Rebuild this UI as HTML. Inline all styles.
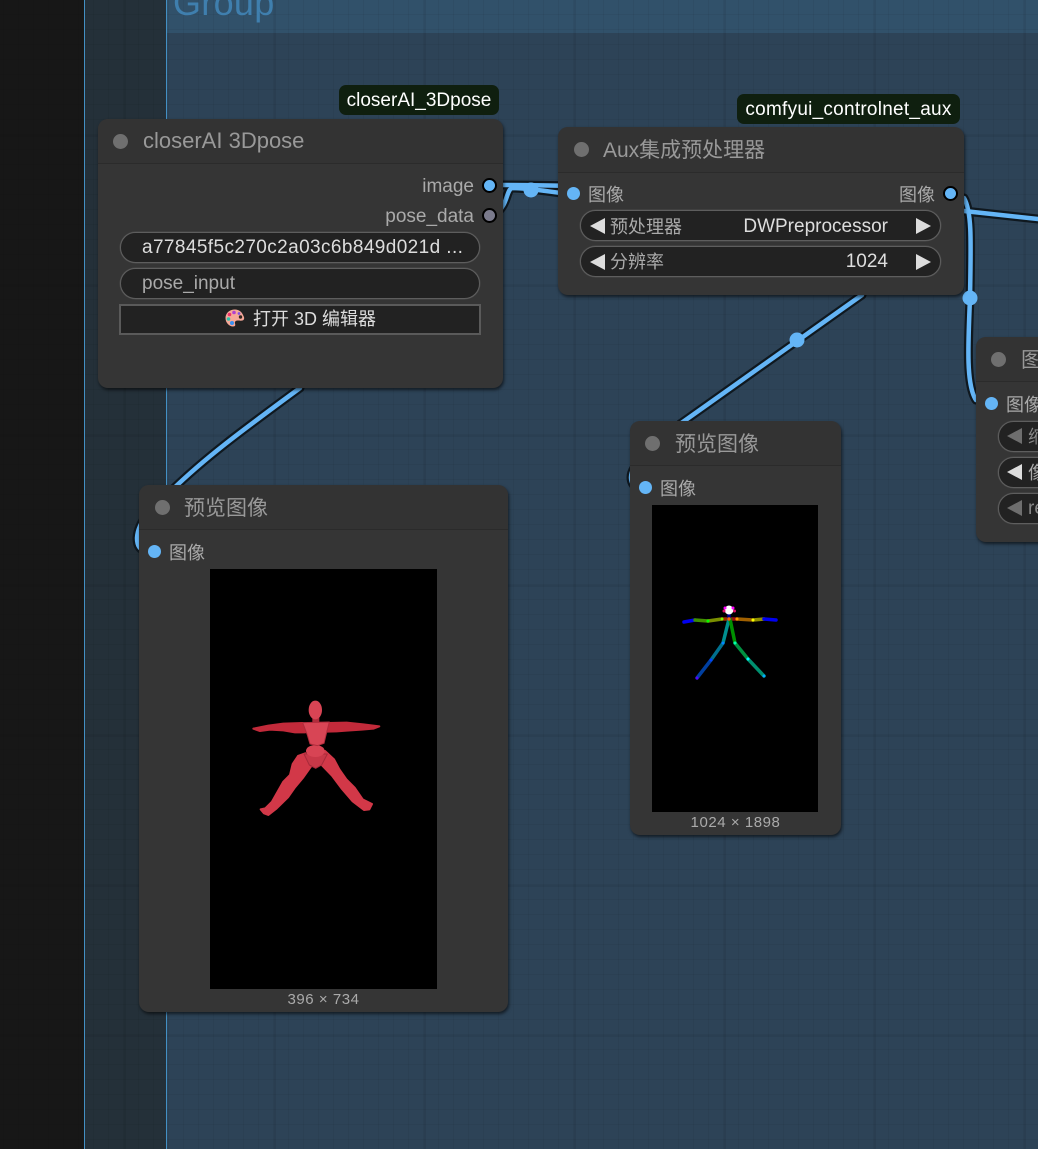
<!DOCTYPE html>
<html><head><meta charset="utf-8">
<style>
html,body{margin:0;padding:0;background:#171717}
#c{position:relative;width:1038px;height:1149px;overflow:hidden;background:#171717;font-family:"Liberation Sans","Noto Sans CJK SC",sans-serif}
.abs{position:absolute}
.grid{position:absolute;left:0;top:0;width:1038px;height:1149px;
background-image:
linear-gradient(to right,rgba(0,0,0,.07) 0,rgba(0,0,0,.07) 2px,transparent 2px),
linear-gradient(to bottom,rgba(0,0,0,.06) 0,rgba(0,0,0,.06) 2px,transparent 2px),
linear-gradient(to right,rgba(0,0,0,.05) 0,rgba(0,0,0,.05) 1px,transparent 1px),
linear-gradient(to bottom,rgba(0,0,0,.05) 0,rgba(0,0,0,.05) 1px,transparent 1px);
background-size:150px 150px,150px 150px,15px 15px,15px 15px;
background-position:124px 0,0 135px,3px 0,0 14px}
.node{position:absolute;background:#353535;border-radius:10px;box-shadow:1px 2px 3px rgba(0,0,0,.6)}
.hd{position:absolute;left:0;right:0;top:0;height:44px;background:#333;border-radius:10px 10px 0 0;border-bottom:1px solid #2b2b2b}
.dot{position:absolute;left:15.500px;top:15px;width:15px;height:15px;border-radius:50%;background:#6f6f6f}
.ttl{position:absolute;left:45px;top:11px;font-size:21px;line-height:25px;color:#999;white-space:nowrap}
.t{position:absolute;font-size:18px;line-height:22px;color:#aaa;white-space:nowrap;margin-top:1px}
.lat{font-size:19px}
.w{color:#ddd}
.sock{position:absolute;width:13px;height:13px;border-radius:50%;background:#64b5f6}
.socko{position:absolute;width:11px;height:11px;border-radius:50%;background:#64b5f6;border:2px solid #000}
.pill{position:absolute;height:29px;border:1px solid #5e5e5e;border-radius:16px;background:#222;box-shadow:0 0 0 .5px #4a4a4a}
.tag{position:absolute;height:30px;background:#0f1f0f;border-radius:7px;color:#fff;font-size:19px;line-height:31px;text-align:center;white-space:nowrap}
.l{position:absolute;width:0;height:0;border-top:8px solid transparent;border-bottom:8px solid transparent;border-right:15px solid #ddd}
.r{position:absolute;width:0;height:0;border-top:8px solid transparent;border-bottom:8px solid transparent;border-left:15px solid #ddd}
.dim{border-right-color:#6e6e6e}
.cap{position:absolute;text-align:center;font-size:15px;line-height:18px;color:#aaa;letter-spacing:.55px;margin-top:1px}
</style></head>
<body><div id="c">
<div class="abs" style="left:84px;top:0;width:82px;height:1149px;background:#243039"></div>
<div class="abs" style="left:166px;top:0;width:872px;height:1149px;background:#2d4357"></div>
<div class="abs" style="left:166px;top:0;width:872px;height:33px;background:#31516a"></div>
<div class="grid"></div>
<div class="abs" style="left:84px;top:0;width:1px;height:1149px;background:#4390c4"></div>
<div class="abs" style="left:166px;top:0;width:1px;height:1149px;background:#4390c4"></div>
<div class="abs" style="left:173px;top:-18px;font-size:36px;line-height:42px;color:#3f7fae;letter-spacing:.3px">Group</div>

<svg class="abs" style="left:0;top:0" width="1038" height="1149" viewBox="0 0 1038 1149" fill="none">
<g stroke="#0f181f" stroke-width="9" stroke-linecap="round">
<path d="M300 388 C240 432 205 458 172 490 C154 506 138 520 137 538 C137 546 140 550 146 551"/>
<path d="M495 185 C520 185 540 185 570 186"/>
<path d="M495 214 C508 206 506 190 512 188 C530 188 550 192 570 194"/>
<path d="M862 295 L680 424"/>
<path d="M964 198 C972 212 971 240 970 298 C968 345 966 385 976 400"/>
<path d="M964 211 L1038 219"/>
<path d="M634 468 C629 476 630 487 640 488"/>
</g>
<g stroke="#64b5f6" stroke-width="4.500" stroke-linecap="round">
<path d="M300 388 C240 432 205 458 172 490 C154 506 138 520 137 538 C137 546 140 550 146 551"/>
<path d="M495 214 C508 206 506 190 512 188 C530 188 550 192 570 194"/>
<path d="M495 185 C520 185 540 185 570 186"/>
<path d="M862 295 L680 424"/>
<path d="M964 198 C972 212 971 240 970 298 C968 345 966 385 976 400"/>
<path d="M964 211 L1038 219"/>
<path d="M634 468 C629 476 630 487 640 488"/>
</g>
<circle cx="531" cy="190" r="7.500" fill="#64b5f6"/>
<circle cx="797" cy="340" r="7.500" fill="#64b5f6"/>
<circle cx="970" cy="298" r="7.500" fill="#64b5f6"/>
</svg>

<!-- closerAI node -->
<div class="tag" style="left:339px;top:85px;width:160px">closerAI_3Dpose</div>
<div class="node" style="left:98px;top:119px;width:405px;height:269px">
<div class="hd"></div><div class="dot" style="left:15px;top:14.500px"></div>
<div class="ttl" style="font-size:22px;top:9px">closerAI 3Dpose</div>
<div class="t lat" style="right:29px;top:56px">image</div>
<div class="t lat" style="right:29px;top:86px">pose_data</div>
<div class="socko" style="left:384px;top:58.500px"></div>
<div class="socko" style="left:384px;top:88.500px;background:#7a7a8c"></div>
<div class="pill" style="left:22px;top:113px;width:358px"></div>
<div class="t lat w" style="left:44px;top:117px;letter-spacing:.4px">a77845f5c270c2a03c6b849d021d ...</div>
<div class="pill" style="left:22px;top:149px;width:358px"></div>
<div class="t lat" style="left:44px;top:153px">pose_input</div>
<div class="abs" style="left:21px;top:185px;width:358px;height:27px;border:2px solid #5a5a5a;background:#222"></div>
<svg class="abs" style="left:127px;top:190px" width="20" height="18" viewBox="0 0 20 18"><path d="M10 .5C4.500 .5 .5 4 .5 9c0 5 4 8.500 7.500 8.500 2.500 0 2.500-1.500 2-3-.5-1.500.5-3 2.500-3 2 0 3 .5 5 0 2-.5 2-3 1-4.500C17 3 14 .5 10 .5z" fill="#f7a898"/><circle cx="9" cy="3.500" r="1.800" fill="#b040d0"/><circle cx="4.500" cy="5.500" r="1.800" fill="#f0306a"/><circle cx="3.500" cy="10" r="1.800" fill="#30c0a8"/><circle cx="7" cy="14" r="2" fill="#3a90f0"/><circle cx="14" cy="4.500" r="1.400" fill="#8050e0"/><circle cx="15.500" cy="8" r="1.700" fill="#33261f"/></svg>
<div class="t w" style="left:155px;top:188px">打开 3D 编辑器</div>
</div>

<!-- Aux node -->
<div class="tag" style="left:737px;top:94px;width:223px;letter-spacing:.25px">comfyui_controlnet_aux</div>
<div class="node" style="left:558px;top:127px;width:406px;height:168px">
<div class="hd" style="height:45px"></div><div class="dot"></div>
<div class="ttl">Aux集成预处理器</div>
<div class="sock" style="left:8.500px;top:59.500px"></div>
<div class="t" style="left:30px;top:56px">图像</div>
<div class="t" style="right:29px;top:56px">图像</div>
<div class="socko" style="left:385px;top:59px"></div>
<div class="pill" style="left:22px;top:83px;width:359px"></div>
<div class="l" style="left:32px;top:91px"></div>
<div class="t" style="left:52px;top:88px">预处理器</div>
<div class="t lat w" style="right:76px;top:88px">DWPreprocessor</div>
<div class="r" style="left:358px;top:91px"></div>
<div class="pill" style="left:22px;top:119px;width:359px"></div>
<div class="l" style="left:32px;top:127px"></div>
<div class="t" style="left:52px;top:123px">分辨率</div>
<div class="t lat w" style="right:76px;top:123px">1024</div>
<div class="r" style="left:358px;top:127px"></div>
</div>

<!-- right partial node -->
<div class="node" style="left:976px;top:337px;width:120px;height:205px">
<div class="hd"></div><div class="dot" style="left:15px"></div>
<div class="ttl">图像缩放</div>
<div class="sock" style="left:8.500px;top:60px"></div>
<div class="t" style="left:30px;top:56px">图像</div>
<div class="pill" style="left:22px;top:84px;width:100px"></div>
<div class="l dim" style="left:31px;top:91px"></div><div class="t" style="left:52px;top:88px;color:#888">缩</div>
<div class="pill" style="left:22px;top:120px;width:100px"></div>
<div class="l" style="left:31px;top:127px"></div><div class="t" style="left:52px;top:124px">像</div>
<div class="pill" style="left:22px;top:156px;width:100px"></div>
<div class="l dim" style="left:31px;top:163px"></div><div class="t lat" style="left:52px;top:160px;color:#888">re</div>
</div>

<!-- preview 2 -->
<div class="node" style="left:630px;top:421px;width:211px;height:414px">
<div class="hd"></div><div class="dot" style="left:15px"></div>
<div class="ttl">预览图像</div>
<div class="sock" style="left:8.500px;top:60px"></div>
<div class="t" style="left:30px;top:56px">图像</div>
<div class="abs" style="left:22px;top:84px;width:166px;height:307px;background:#000"></div>
<div class="cap" style="left:0;width:211px;top:392px">1024 × 1898</div>
</div>
<svg class="abs" style="left:670px;top:590px" width="120" height="100" viewBox="0 0 120 100" fill="none" stroke-linecap="round" stroke-width="3.500">
<path d="M14 32 L25 30" stroke="#0000f0"/>
<path d="M25 30 L38 31" stroke="#3f8f00"/>
<path d="M38 31 L52 29" stroke="#7a8f00"/>
<path d="M52 29 L59 29" stroke="#a03000"/>
<path d="M59 29 L67 29" stroke="#a01010"/>
<path d="M67 29 L83 30" stroke="#a06000"/>
<path d="M83 30 L94 29" stroke="#8f8f00"/>
<path d="M94 29 L106 30" stroke="#0000f0"/>
<path d="M59 29 L53 53" stroke="#008f8f"/>
<path d="M53 53 L41 70" stroke="#00708f"/>
<path d="M41 70 L27 88" stroke="#003fa0"/>
<path d="M60 29 L65 53" stroke="#009000"/>
<path d="M65 53 L78 69" stroke="#009040"/>
<path d="M78 69 L94 86" stroke="#009070"/>
<path d="M59 29 V23" stroke="#000090"/>
<circle cx="59" cy="20" r="4.500" fill="#fff"/><circle cx="55" cy="18" r="1.500" fill="#f0f"/><circle cx="63" cy="18" r="1.500" fill="#f0f"/><circle cx="64.500" cy="21" r="1.500" fill="#e0106a"/><circle cx="54" cy="21" r="1.500" fill="#e0106a"/>
<circle cx="38" cy="31" r="1.500" fill="#0f0"/><circle cx="52" cy="29" r="1.500" fill="#7f0"/><circle cx="67" cy="29" r="1.500" fill="#f90"/><circle cx="83" cy="30" r="1.500" fill="#ff0"/><circle cx="53" cy="53" r="1.500" fill="#08f"/><circle cx="65" cy="53" r="1.500" fill="#0fa"/><circle cx="41" cy="70" r="1.500" fill="#04f"/><circle cx="78" cy="69" r="1.500" fill="#0ff"/><circle cx="27" cy="88" r="1.500" fill="#50f"/><circle cx="94" cy="86" r="1.500" fill="#0af"/><circle cx="59" cy="29" r="1.700" fill="#f60"/>
</svg>

<!-- preview 1 -->
<div class="node" style="left:139px;top:485px;width:369px;height:527px">
<div class="hd"></div><div class="dot"></div>
<div class="ttl">预览图像</div>
<div class="sock" style="left:8.500px;top:60px"></div>
<div class="t" style="left:30px;top:56px">图像</div>
<div class="abs" style="left:71px;top:84px;width:227px;height:420px;background:#000"></div>
<div class="cap" style="left:71px;width:227px;top:505px">396 × 734</div>
</div>
<svg class="abs" style="left:230px;top:680px" width="170" height="150" viewBox="0 0 510 450">
<g stroke-linejoin="round" stroke-width="6">
<!-- arms -->
<path d="M70 146 L115 137 L160 131 L218 129 L226 157 L195 157 L160 151 L120 149 L90 153 Z" fill="#c22a3a" stroke="#c22a3a"/>
<path d="M295 129 L350 128 L400 133 L448 139 L430 146 L395 149 L350 152 L320 154 L290 155 Z" fill="#c22a3a" stroke="#c22a3a"/>
<!-- legs -->
<path d="M226 220 L204 228 L188 252 L180 285 L160 305 L143 335 L126 365 L106 385 L92 388 L102 400 L115 405 L138 387 L174 352 L195 322 L220 292 L244 258 Z" fill="#d23848" stroke="#d23848"/>
<path d="M285 213 L312 238 L328 268 L349 298 L374 323 L398 358 L426 372 L418 388 L402 390 L368 364 L336 327 L306 287 L276 256 Z" fill="#d23848" stroke="#d23848"/>
<!-- pelvis -->
<path d="M222 222 L292 222 L275 255 L257 265 L238 255 Z" fill="#c83848" stroke="#a82a3a" stroke-width="3"/>
<ellipse cx="256" cy="213" rx="28" ry="18" fill="#d84454" stroke="none"/>
<!-- torso -->
<path d="M218 128 L298 126 L288 165 L282 190 L262 197 L240 192 L232 165 Z" fill="#d84555" stroke="#b02c3c" stroke-width="3"/>
<rect x="247" y="110" width="21" height="18" fill="#b02c3c" stroke="none"/>
<ellipse cx="256" cy="90" rx="20" ry="28" fill="#d84454" stroke="none"/>
</g>
</svg>
</div></body></html>
